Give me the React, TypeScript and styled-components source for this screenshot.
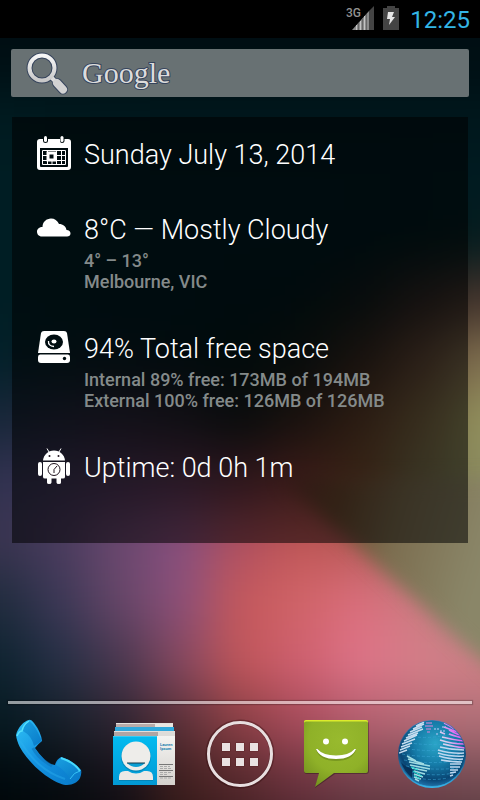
import React from "react";
import styled, { createGlobalStyle } from "styled-components";

const GlobalStyle = createGlobalStyle`
  *, *::before, *::after { box-sizing: border-box; }
  body { margin: 0; background: #000; }
  button { font: inherit; color: inherit; border: 0; padding: 0; background: none; cursor: pointer; }
`;

const Screen = styled.main`
  position: relative;
  z-index: 0;
  display: flex;
  flex-direction: column;
  min-height: 100vh;
  overflow: hidden;
  background: #001318;
  color: #fff;
  font-family: Roboto, "Noto Sans", sans-serif;
`;

const WallpaperArt = styled.svg`
  position: absolute;
  inset: 0;
  z-index: -1;
  width: 100%;
  height: 100%;
`;

const StatusBar = styled.header`
  display: flex;
  align-items: center;
  justify-content: flex-end;
  height: 38px;
  padding: 2px 10px 0;
  background: #000;
`;

const StatusIcon = styled.svg`
  flex: none;
  height: 24px;
  margin-bottom: 4px;
`;

const SignalIcon = styled(StatusIcon)`
  width: 28px;
  margin-right: 9px;
`;

const BatteryIcon = styled(StatusIcon)`
  width: 16px;
  margin-right: 11px;
`;

const Clock = styled.time`
  color: #33b5e5;
  font-size: 24px;
  line-height: 36px;
`;

const SearchButton = styled.button`
  display: flex;
  align-items: center;
  gap: 11px;
  height: 48px;
  margin: 11px 11px 20px;
  padding: 0 14px;
  border-radius: 2px;
  background: #687173;
`;

const SearchIcon = styled.svg`
  flex: none;
  width: 46px;
  height: 48px;
`;

const GoogleWord = styled.span`
  color: #dcdcdc;
  font-family: "Liberation Serif", serif;
  font-size: 30px;
  line-height: 48px;
  -webkit-text-stroke: 2px #36445c;
  paint-order: stroke fill;
`;

const Panel = styled.section`
  display: flex;
  flex-direction: column;
  gap: 37px;
  margin: 0 12px 24px;
  padding: 18px 24px 57px;
  background: rgba(0, 0, 0, 0.53);
`;

const Row = styled.article`
  display: flex;
  align-items: flex-start;
  gap: 12px;
`;

const RowIcon = styled.svg`
  flex: none;
  width: 36px;
  height: 36px;
  fill: #fff;
`;

const RowText = styled.div`
  min-width: 0;
  padding-top: 3px;
`;

const Title = styled.h2`
  margin: 0;
  font-size: 27px;
  font-weight: 300;
  line-height: 35px;
`;

const Details = styled.div`
  padding-top: 2px;
  color: #848a8a;
  font-size: 18px;
  font-weight: 500;
  line-height: 21px;
`;

const Detail = styled.p`
  margin: 0;
`;

const Divider = styled.hr`
  width: auto;
  height: 3px;
  margin: auto 8px 0;
  border: 0;
  background: rgba(255, 255, 255, 0.56);
  box-shadow: 0 0 1px 1px rgba(0, 0, 0, 0.22);
`;

const Dock = styled.nav`
  display: grid;
  grid-template-columns: repeat(5, 1fr);
  padding: 14px 0 10px;
`;

const DockButton = styled.button`
  display: flex;
  justify-content: center;
`;

const DockIcon = styled.svg`
  width: 72px;
  height: 72px;
  overflow: visible;
`;

const COLS = [0, 60, 120, 180, 240, 300, 360, 420, 480];
const MESH: Array<[number, string[]]> = [
  [0, ["#000c10", "#000c10", "#000c10", "#000c10", "#000c10", "#000c10", "#000c10", "#000c10", "#000c10"]],
  [60, ["#000f14", "#000f14", "#000f14", "#000f14", "#000f14", "#000f14", "#000f14", "#000f14", "#000f14"]],
  [120, ["#001b20", "#00191e", "#00181d", "#00171c", "#00171c", "#00171c", "#00171c", "#00171c", "#00171c"]],
  [180, ["#001d23", "#001c22", "#001b21", "#001a20", "#001a20", "#001a20", "#001a20", "#00191f", "#001b21"]],
  [240, ["#001e24", "#001d23", "#001c22", "#001b21", "#001a20", "#001a20", "#00191e", "#02191b", "#061c1e"]],
  [300, ["#001e24", "#001c22", "#001b21", "#001a20", "#00191e", "#03191b", "#101a1a", "#2d2422", "#45342c"]],
  [360, ["#03202a", "#071d26", "#091b22", "#06191e", "#041818", "#121a1a", "#34261e", "#5c4232", "#807050"]],
  [420, ["#18273a", "#22263a", "#2a2436", "#26202c", "#161a1c", "#38261e", "#5e3c28", "#75603e", "#92925e"]],
  [480, ["#303250", "#3c3454", "#4b3454", "#573450", "#62303c", "#7d3a34", "#734a2c", "#78704c", "#8b8c60"]],
  [540, ["#393450", "#4a3c5e", "#6b4870", "#874f7e", "#b05060", "#c05656", "#b85a58", "#827358", "#87825f"]],
  [600, ["#202c3e", "#3c3856", "#664668", "#8b4f79", "#c4585b", "#d06468", "#da6e7c", "#cc7a80", "#908070"]],
  [660, ["#0e2330", "#263046", "#4a3850", "#854860", "#c0565a", "#cf6070", "#de7488", "#d57f8a", "#cf8086"]],
  [720, ["#061a22", "#16202b", "#2f2532", "#5c3139", "#8c4046", "#a84c5c", "#b46070", "#b66a76", "#b07078"]],
  [780, ["#000a0e", "#070d12", "#16121a", "#40201f", "#56292d", "#6e3440", "#75424d", "#75454f", "#754d54"]],
  [840, ["#000305", "#020507", "#0b080b", "#2b1514", "#3a1b1e", "#45242a", "#4b2c32", "#4d3036", "#4d3437"]],
];

function Wallpaper() {
  return (
    <WallpaperArt viewBox="0 0 480 800" preserveAspectRatio="none" aria-hidden="true">
      <defs>
        <filter id="soft" filterUnits="userSpaceOnUse" x="-120" y="-120" width="720" height="1040" colorInterpolationFilters="sRGB">
          <feGaussianBlur stdDeviation="24" />
        </filter>
        <filter id="edge" filterUnits="userSpaceOnUse" x="100" y="100" width="600" height="700" colorInterpolationFilters="sRGB">
          <feGaussianBlur stdDeviation="9" />
        </filter>
        <linearGradient id="olive" gradientUnits="userSpaceOnUse" x1="280" y1="460" x2="490" y2="520">
          <stop offset="0" stopColor="#40281e" stopOpacity="0" />
          <stop offset="0.3" stopColor="#6b482e" />
          <stop offset="0.6" stopColor="#7c6e50" />
          <stop offset="1" stopColor="#8a8668" />
        </linearGradient>
      </defs>
      <g filter="url(#soft)">
        {MESH.map(([y, colors]) =>
          colors.map((fill, i) => {
            const first = i === 0;
            const last = i === COLS.length - 1;
            return (
              <rect
                key={`${y}-${i}`}
                x={COLS[i] - (first ? 120 : 30)}
                y={y - 30}
                width={first || last ? 151 : 61}
                height={61}
                fill={fill}
              />
            );
          }),
        )}
      </g>
      <path d="M270 472 350 540 410 594 480 658 560 730V480H330z" fill="url(#olive)" filter="url(#edge)" />
    </WallpaperArt>
  );
}

function PhoneIcon() {
  return (
    <DockIcon viewBox="0 0 72 72" aria-hidden="true">
      <defs>
        <linearGradient id="phoneBody" x1="0" y1="0" x2="1" y2="1">
          <stop offset="0" stopColor="#2fc0f4" />
          <stop offset="0.45" stopColor="#1493e2" />
          <stop offset="1" stopColor="#0879c8" />
        </linearGradient>
        <linearGradient id="phoneFace" x1="0" y1="0" x2="0.6" y2="1">
          <stop offset="0" stopColor="#1a9fe0" />
          <stop offset="1" stopColor="#0b80cc" />
        </linearGradient>
      </defs>
      <path
        d="M17 2C12 3 6 9 4 17C5 25 9 32 14.500 39C21 47 29 55 39 61C46 65 51 67 55 67C61 67 66 64 68 60Q70 55 69 52C64 46 57 41 49 39Q44 42 43 47Q38 47 33 42Q27 36 23 30Q26 26 30 23Q29 14 22 5Q19 1 17 2z"
        fill="url(#phoneBody)"
      />
      <path d="M17 3Q23 7 29 21Q30 23 27 25L22 28Q20 18 11 13Q12 7 17 3z" fill="url(#phoneFace)" />
      <path d="M17 3Q11 7 10 13Q7 13 5 18" fill="none" stroke="#55e0fb" strokeWidth="1.500" />
      <path d="M21 30Q26 40 40 48" fill="none" stroke="#0b6fb6" strokeWidth="3" opacity="0.5" />
      <path d="M8 23Q18 39 28 47Q38 56 53 61" fill="none" stroke="#2db2f0" strokeWidth="2" opacity="0.4" />
      <path d="M49 40Q63 44 68 53Q63 54 58 61Q53 52 44 47Q45 42 49 40z" fill="url(#phoneFace)" />
      <path d="M49 40Q62 44 68 53" fill="none" stroke="#48dafb" strokeWidth="2" />
      <path d="M58 61Q62 54 68 53" fill="none" stroke="#36c2f5" strokeWidth="1" />
    </DockIcon>
  );
}

function ContactsIcon() {
  return (
    <DockIcon viewBox="0 0 72 72" aria-hidden="true">
      <defs>
        <linearGradient id="paper" x1="0" y1="0" x2="0" y2="1">
          <stop offset="0" stopColor="#f4f3f1" />
          <stop offset="1" stopColor="#d5d2ce" />
        </linearGradient>
        <linearGradient id="cyan" x1="0" y1="0" x2="0" y2="1">
          <stop offset="0" stopColor="#02bbf0" />
          <stop offset="1" stopColor="#0299d4" />
        </linearGradient>
      </defs>
      <rect x="8" y="5" width="57" height="5" fill="#b9aba9" />
      <rect x="47" y="5" width="18" height="5" fill="#e8e6e2" />
      <rect x="8" y="5" width="57" height="1" fill="#e6e2df" />
      <rect x="7" y="9" width="59" height="4" fill="#2fa9dd" />
      <rect x="6" y="13" width="61" height="6" fill="#b0a5a4" />
      <rect x="50" y="13" width="17" height="6" fill="#dedcd9" />
      <rect x="6" y="13" width="61" height="1" fill="#e2dfdc" />
      <rect x="5" y="18" width="45" height="49" fill="url(#cyan)" />
      <rect x="5" y="18" width="45" height="1" fill="#35ccf5" />
      <rect x="49" y="18" width="18" height="49" fill="url(#paper)" />
      <path d="M11 62V59Q11 53 17 53H22Q28 58 34 53H39Q45 53 45 59V62z" fill="#066f9c" opacity="0.5" transform="translate(0 1)" />
      <path d="M11 62V59Q11 53 17 53H20Q28 58 36 53H39Q45 53 45 59V62z" fill="#ebe9e6" />
      <circle cx="28" cy="39" r="15" fill="#066f9c" opacity="0.5" />
      <circle cx="28" cy="38" r="14.500" fill="#eeedea" />
      <path d="M19 45H37Q33 49 28 49Q23 49 19 45z" fill="#0a9fd4" />
      <path d="M19 45H37" stroke="#17384a" strokeWidth="1" />
      <text x="52" y="28" fontFamily="Roboto, sans-serif" fontSize="4" fontWeight="700" fill="#1a7db0">Lauren</text>
      <text x="52" y="32" fontFamily="Roboto, sans-serif" fontSize="4" fontWeight="700" fill="#1a7db0">Ipsum</text>
      <path d="M51 46.500H65M51 52.500H65M51 58.500H65" stroke="#777" strokeWidth="1" />
      <path d="M52 48.500H62M52 50.500H64M52 54.500H63M52 56.500H60M52 60H64" stroke="#aaa" strokeWidth="1" strokeDasharray="3 1" />
    </DockIcon>
  );
}

function AppsIcon() {
  return (
    <DockIcon viewBox="0 0 72 72" aria-hidden="true">
      <circle cx="36" cy="36" r="32" fill="none" stroke="#200" strokeWidth="5" opacity="0.3" />
      <circle cx="36" cy="36" r="31.500" fill="none" stroke="#e8dfe0" strokeWidth="3" />
      {[25, 40].map((y) =>
        [18, 32, 46].map((x) => (
          <g key={`${x}-${y}`}>
            <rect x={x - 0.5} y={y - 0.5} width="9" height="9" fill="#300" opacity="0.3" />
            <rect x={x} y={y} width="8" height="8" fill="#eae2e2" />
          </g>
        )),
      )}
    </DockIcon>
  );
}

function MessagesIcon() {
  return (
    <DockIcon viewBox="0 0 72 72" aria-hidden="true">
      <defs>
        <radialGradient id="bubble" cx="0.55" cy="0.3" r="0.8">
          <stop offset="0" stopColor="#98ba2e" />
          <stop offset="0.6" stopColor="#8fb128" />
          <stop offset="1" stopColor="#728f1e" />
        </radialGradient>
      </defs>
      <path d="M7 3H66Q69 3 69 6V53Q69 56 66 56H35L15 70L19 56H7Q4 56 4 53V6Q4 3 7 3z" fill="#000" opacity="0.3" />
      <path d="M6 2H66Q68 2 68 4V53Q68 55 66 55H34L15 69L19 55H6Q4 55 4 53V4Q4 2 6 2z" fill="url(#bubble)" />
      <path d="M4 5V4Q4 2 6 2H66Q68 2 68 4V5Q68 3.500 66 3.500H6Q4 3.500 4 5z" fill="#dcec2c" />
      <path d="M16 32Q20 43 36 43Q52 43 56 32L54 31Q49 38 36 38Q23 38 18 31z" fill="#5f7c15" opacity="0.5" />
      <circle cx="26" cy="23.500" r="3" fill="#fff" />
      <circle cx="45" cy="23.500" r="3" fill="#fff" />
      <path d="M16 31Q20 41 36 41Q52 41 56 31L54.500 31Q49 37.500 36 37.500Q23 37.500 17.500 31z" fill="#fff" />
    </DockIcon>
  );
}

function GlobeIcon() {
  return (
    <DockIcon viewBox="0 0 72 72" aria-hidden="true">
      <defs>
        <radialGradient id="ocean" cx="0.55" cy="0.35" r="0.65">
          <stop offset="0" stopColor="#2ba6c8" />
          <stop offset="0.5" stopColor="#157ba8" />
          <stop offset="0.85" stopColor="#094674" />
          <stop offset="1" stopColor="#1e6fa6" />
        </radialGradient>
        <linearGradient id="rim" x1="0" y1="0" x2="0" y2="1">
          <stop offset="0" stopColor="#4b7fc0" />
          <stop offset="0.5" stopColor="#174a78" />
          <stop offset="1" stopColor="#36b8ee" />
        </linearGradient>
        <linearGradient id="east" gradientUnits="userSpaceOnUse" x1="50" y1="24" x2="66" y2="14">
          <stop offset="0" stopColor="#d9d0ee" />
          <stop offset="1" stopColor="#e23cf0" />
        </linearGradient>
        <clipPath id="sphere">
          <circle cx="36" cy="35.500" r="33" />
        </clipPath>
      </defs>
      <circle cx="36" cy="36" r="34" fill="url(#rim)" />
      <circle cx="36" cy="35.500" r="33" fill="url(#ocean)" />
      <g clipPath="url(#sphere)" fill="none">
        <g stroke="#3aa3d4" strokeWidth="1" strokeDasharray="3 2" opacity="0.6">
          <path d="M12 18Q36 22 58 15M8 24Q34 29 64 24M6 30Q34 35 66 30M6 36Q34 41 66 36M8 42Q36 47 66 42M10 48Q36 53 62 50M16 54Q36 59 58 55M22 60Q36 63 52 60" />
        </g>
        <g stroke="#c5dcef" strokeWidth="1.500">
          <path d="M20 8L28 4M17 11L28 6M14 14L26 9M12 17L27 11M10 20L22 15M8 23L21 17M6 26L19 21M5 29L16 25M4 32L14 28M3 35L11 32" />
          <path d="M30 5H36M29 8H37M30 11H35M31 14H34" stroke="#a184cb" />
          <path d="M38 11H43M46 9H50M44 13H49M40 16H42" stroke="#8bb6e3" strokeDasharray="2 1" />
        </g>
        <g stroke="url(#east)" strokeWidth="1.600">
          <path d="M48 5Q55 8 58 11M48 9Q58 13 62 14M53 12Q60 16 65 17M44 14L49 16M53 16Q62 19 67 20M46 19Q58 22 68 23M44 22Q56 26 68 26M47 26Q60 29 69 30" />
        </g>
        <g stroke="#bed7ef" strokeWidth="1.600">
          <path d="M44 29Q56 32 68 32M42 32Q56 36 68 35M42 35Q56 39 68 38M43 38Q56 42 67 41M45 42Q57 44 66 44M54 46L65 46M54 49L64 49M54 52L62 52M54 55L60 54M54 58L57 57" />
        </g>
        <g stroke="#9fdbe3" strokeWidth="1.500">
          <path d="M11 38L20 43M12 41L28 46M13 44L34 48M14 47L34 51M16 50L31 53M18 53L29 56M18 56L27 59M18 59L25 61M19 61L23 63" />
        </g>
        <path d="M17 53L26 58M18 57L24 61M15 49L22 52" stroke="#22e0d0" strokeWidth="1" />
        <path d="M5 44Q8 53 16 60V51Q9 49 5 44z" fill="#052a50" opacity="0.8" />
        <path d="M14 62Q36 74 58 62L53 66Q36 76 19 66z" fill="#4cccf8" opacity="0.7" />
      </g>
    </DockIcon>
  );
}

const rows = [
  {
    title: "Sunday July 13, 2014",
    details: [],
    icon: (
      <>
        <path
          fillRule="evenodd"
          d="M4 4H7V6Q7 8 9.500 8Q12 8 12 6V4H24V6Q24 8 26 8Q28.500 8 28.500 6V4H32Q35 4 35 7V32Q35 35 32 35H4Q1 35 1 32V7Q1 4 4 4zM4 13V31Q4 32 5 32H31Q32 32 32 31V13z"
        />
        <rect x="8" y="1" width="3" height="6" rx="1.500" />
        <rect x="24.500" y="1" width="3" height="6" rx="1.500" />
        <path
          d="M6.500 15.500H29.500V29.500H6.500zM6 20.500H30M6 25.500H30M11.500 15V30M16 25V30M20.500 15V30M25.500 15V30"
          fill="none"
          stroke="#fff"
          strokeWidth="1"
        />
        <rect x="12" y="18" width="7" height="7" fill="#000d11" stroke="#fff" strokeWidth="3" />
      </>
    ),
  },
  {
    title: "8°C — Mostly Cloudy",
    details: ["4° – 13°", "Melbourne, VIC"],
    icon: <path d="M6 26.500C2.500 26.500 1 24 1 21.500C1 19 3.500 17 6.500 17C6.500 12 10.500 8.500 15 8.500C18.500 8.500 21.500 10.500 23 14C27 14 30 16.500 30.500 20C33 20 34.500 21.500 34.500 23.500C34.500 25.500 33 26.500 31 26.500z" />,
  },
  {
    title: "94% Total free space",
    details: ["Internal 89% free: 173MB of 194MB", "External 100% free: 126MB of 126MB"],
    icon: (
      <>
        <path d="M8 2H28Q30.500 2 31 4L34 24H2L5 4Q5.500 2 8 2z" />
        <path d="M4 25.500H32Q34 25.500 34 28V31Q34 34 31 34H5Q2 34 2 31V28Q2 25.500 4 25.500z" />
        <ellipse cx="18" cy="13" rx="9" ry="7.500" fill="#000d11" />
        <ellipse cx="18" cy="12.500" rx="2.500" ry="2" />
        <path d="M12.500 12Q12 17 18 17.500" fill="none" stroke="#fff" strokeWidth="1.300" />
        <circle cx="28.500" cy="29.500" r="1.700" fill="#000d11" />
      </>
    ),
  },
  {
    title: "Uptime: 0d 0h 1m",
    details: [],
    icon: (
      <>
        <path d="M7 12.500C7.500 7 12 2.500 18 2.500S28.500 7 29 12.500z" />
        <path d="M13 4L11 0.500M23 4L25 0.500" stroke="#fff" strokeWidth="1" />
        <path d="M7 14H29V29Q29 30.500 27 30.500H25V34.500Q25 36 23 36Q20.500 36 20.500 34.500V30.500H15.500V34.500Q15.500 36 13 36Q11 36 11 34.500V30.500H9Q7 30.500 7 29z" />
        <rect x="2" y="14" width="4" height="14" rx="2" />
        <rect x="30" y="14" width="4" height="14" rx="2" />
        <circle cx="13.500" cy="8" r="1" fill="#20141f" />
        <circle cx="22.500" cy="8" r="1" fill="#20141f" />
        <circle cx="18" cy="21.500" r="6" fill="none" stroke="#20141f" strokeWidth="1" />
        <path d="M18 25V21.500L21 18" fill="none" stroke="#20141f" strokeWidth="1" />
      </>
    ),
  },
];

const apps = [
  { label: "Phone", Icon: PhoneIcon },
  { label: "Contacts", Icon: ContactsIcon },
  { label: "Apps", Icon: AppsIcon },
  { label: "Messages", Icon: MessagesIcon },
  { label: "Browser", Icon: GlobeIcon },
];

export default function App() {
  return (
    <Screen>
      <GlobalStyle />
      <Wallpaper />
      <StatusBar>
        <SignalIcon viewBox="0 0 28 24" aria-label="3G signal">
          <path d="M28 0V24H23V5z" fill="#444" />
          <path d="M23 5V24H6z" fill="#8c8c8c" />
          <path d="M10.500 19V24M14.500 15V24M18.500 10V24" stroke="#c4c4c4" strokeWidth="1" />
          <path d="M12.500 17V24M16.500 13V24M20.500 8V24" stroke="#666" strokeWidth="1" />
          <text x="0" y="11" fontFamily="Roboto, sans-serif" fontSize="12" fontWeight="500" fill="#929292">3G</text>
        </SignalIcon>
        <BatteryIcon viewBox="0 0 16 24" aria-label="Charging">
          <path d="M4 0H12V2H16V24H0V2H4z" fill="#444" />
          <path d="M5 6H11L9 11H12L6 19L7 13H4z" fill="#e6e6e6" />
        </BatteryIcon>
        <Clock>12:25</Clock>
      </StatusBar>
      <SearchButton aria-label="Google search">
        <SearchIcon viewBox="0 0 46 48" aria-hidden="true">
          <defs>
            <linearGradient id="lens" x1="0" y1="0" x2="0" y2="1">
              <stop offset="0" stopColor="#f6f6f6" />
              <stop offset="1" stopColor="#c9c9c9" />
            </linearGradient>
          </defs>
          <circle cx="17" cy="19" r="12.500" fill="none" stroke="#36445c" strokeWidth="6" />
          <path d="M26 28L29 31" stroke="#36445c" strokeWidth="6" />
          <path d="M32 34L38 40.500" stroke="#36445c" strokeWidth="10" strokeLinecap="round" />
          <path d="M26 28L30 32" stroke="#dcdcdc" strokeWidth="4" />
          <path d="M32 34L38 40.500" stroke="#d2d2d2" strokeWidth="8" strokeLinecap="round" />
          <circle cx="17" cy="19" r="12.500" fill="none" stroke="url(#lens)" strokeWidth="4" />
        </SearchIcon>
        <GoogleWord>Google</GoogleWord>
      </SearchButton>
      <Panel aria-label="Device summary">
        {rows.map(({ title, details, icon }) => (
          <Row key={title}>
            <RowIcon viewBox="0 0 36 36" aria-hidden="true">
              {icon}
            </RowIcon>
            <RowText>
              <Title>{title}</Title>
              {details.length > 0 && (
                <Details>
                  {details.map((line) => (
                    <Detail key={line}>{line}</Detail>
                  ))}
                </Details>
              )}
            </RowText>
          </Row>
        ))}
      </Panel>
      <Divider />
      <Dock aria-label="Favorites">
        {apps.map(({ label, Icon }) => (
          <DockButton key={label} aria-label={label}>
            <Icon />
          </DockButton>
        ))}
      </Dock>
    </Screen>
  );
}
